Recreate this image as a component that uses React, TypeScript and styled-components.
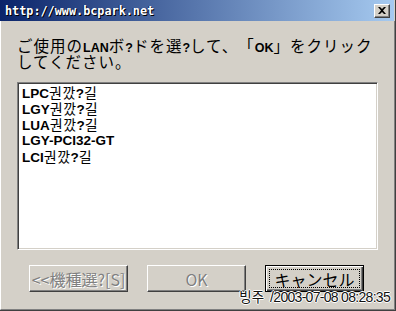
import React from "react";
import styled, { createGlobalStyle } from "styled-components";

const Global = createGlobalStyle`
  html, body { margin: 0; padding: 0; background: #D4D0C8; }
  #root { width: 396px; height: 311px; }
`;

const Window = styled.div`
  box-sizing: border-box;
  width: 396px;
  height: 311px;
  background: #D4D0C8;
  border-right: 1px solid #404040;
  border-bottom: 1px solid #404040;
  display: flex;
  flex-direction: column;
  position: relative;
  overflow: hidden;
`;

const TitleBar = styled.div`
  height: 21px;
  margin-right: 1px;
  flex: none;
  display: flex;
  align-items: center;
  justify-content: space-between;
  padding: 0 4px 0 5px;
  background: linear-gradient(to right, #0A246A, #A6CAF0);
`;

const TitleText = styled.span`
  font-family: "DejaVu Sans Mono", monospace;
  font-weight: bold;
  font-size: 11.8px;
  color: #fff;
  text-shadow: 1px 1px 0 #000, -1px 0 0 #0A246A;
  white-space: nowrap;
`;

const CloseButton = styled.div`
  box-sizing: border-box;
  width: 16px;
  height: 14px;
  background: #D4D0C8;
  border: 1px solid;
  border-color: #fff #404040 #404040 #fff;
  box-shadow: inset -1px -1px #808080;
  display: flex;
  align-items: center;
  justify-content: center;
`;

const Body = styled.div`
  flex: 1;
  display: flex;
  flex-direction: column;
  border-left: 1px solid #fff;
  border-right: 1px solid #808080;
  border-bottom: 1px solid #808080;
  padding: 16px 0 0 16px;
`;

const Message = styled.div`
  font-family: "Noto Sans CJK JP", sans-serif;
  font-size: 15.5px;
  letter-spacing: 1px;
  line-height: 16px;
  height: 32px;
  color: #000;
  white-space: nowrap;
  text-spacing-trim: space-all;
  margin-bottom: 13px;
`;

const MessageLine = styled.div`
  height: 16px;
  line-height: 16px;
`;

const Latin = styled.span`
  font-family: "Liberation Sans", Arial, sans-serif;
  font-weight: bold;
  font-size: 12.5px;
  letter-spacing: 0;
`;

const ListBox = styled.div`
  box-sizing: border-box;
  width: 361px;
  height: 168px;
  background: #fff;
  border: 1px solid;
  border-color: #808080 #fff #fff #808080;
  box-shadow: inset 1px 1px #404040, inset -1px -1px #D4D0C8;
  padding: 1px 0 0 4px;
`;

const Row = styled.div`
  height: 16px;
  line-height: 16px;
  white-space: nowrap;
  color: #000;
`;

const Code = styled.span`
  font-family: "Liberation Sans", Arial, sans-serif;
  font-weight: bold;
  font-size: 13.5px;
`;

const Hangul = styled.span`
  display: inline-block;
  height: 16px;
  line-height: 16px;
  font-family: "Noto Sans CJK KR", sans-serif;
  font-size: 14px;
  font-weight: 400;
  letter-spacing: 0.5px;
`;

const ButtonRow = styled.div`
  display: flex;
  gap: 19px;
  margin: 15px 0 0 12px;
`;

const Button = styled.div<{ $disabled?: boolean; $default?: boolean }>`
  box-sizing: border-box;
  width: 99px;
  height: 27px;
  background: #D4D0C8;
  border: 1px solid;
  border-color: ${(p) => (p.$default ? "#000" : "#fff #404040 #404040 #fff")};
  box-shadow: ${(p) =>
    p.$default
      ? "inset 1px 1px #fff, inset -1px -1px #404040, inset -2px -2px #808080"
      : "inset -1px -1px #808080"};
  display: flex;
  padding: ${(p) => (p.$default ? "2px" : "0")};
  font-family: "Noto Sans CJK JP", sans-serif;
  font-size: 16px;
  color: ${(p) => (p.$disabled ? "#808080" : "#000")};
  text-shadow: ${(p) => (p.$disabled ? "1px 1px 0 #fff" : "none")};
`;

const Label = styled.span<{ $focus?: boolean }>`
  flex: 1;
  display: flex;
  align-items: center;
  justify-content: center;
  white-space: nowrap;
  margin: ${(p) => (p.$focus ? "1px" : "0")};
  border: ${(p) => (p.$focus ? "1px dotted #000" : "none")};
  line-height: 1;
`;

const Watermark = styled.div`
  position: absolute;
  right: 5px;
  bottom: 4px;
  display: flex;
  align-items: baseline;
  gap: 6px;
  color: #111;
  text-shadow: 1px 0 #fff, -1px 0 #fff, 0 1px #fff, 0 -1px #fff;
  white-space: nowrap;
`;

const WmKorean = styled.span`
  font-family: "Noto Sans CJK KR", sans-serif;
  font-size: 13.5px;
`;

const WmStamp = styled.span`
  font-family: "Liberation Sans", Arial, sans-serif;
  font-size: 14px;
  letter-spacing: -0.7px;
`;

const items: { code: string; tail: boolean }[] = [
  { code: "LPC", tail: true },
  { code: "LGY", tail: true },
  { code: "LUA", tail: true },
  { code: "LGY-PCI32-GT", tail: false },
  { code: "LCI", tail: true },
];

export default function App() {
  return (
    <>
      <Global />
      <Window>
        <TitleBar>
          <TitleText>http://www.bcpark.net</TitleText>
          <CloseButton>
            <svg width="8" height="7" viewBox="0 0 8 7">
              <path d="M0 0h2l2 2 2-2h2L5 3.5 8 7H6L4 5 2 7H0l3-3.5z" fill="#000" />
            </svg>
          </CloseButton>
        </TitleBar>
        <Body>
          <Message>
            <MessageLine>
              ご使用の<Latin>LAN</Latin>ボ<Latin>?</Latin>ドを選<Latin>?</Latin>して、「<Latin>OK</Latin>」をクリック
            </MessageLine>
            <MessageLine>してください。</MessageLine>
          </Message>
          <ListBox>
            {items.map((it) => (
              <Row key={it.code}>
                <Code>{it.code}</Code>
                {it.tail && (
                  <>
                    <Hangul>권깠</Hangul>
                    <Code>?</Code>
                    <Hangul>길</Hangul>
                  </>
                )}
              </Row>
            ))}
          </ListBox>
          <ButtonRow>
            <Button $disabled>
              <Label>&lt;&lt;機種選?[S]</Label>
            </Button>
            <Button $disabled>
              <Label>OK</Label>
            </Button>
            <Button $default>
              <Label $focus>キャンセル</Label>
            </Button>
          </ButtonRow>
        </Body>
        <Watermark>
          <WmKorean>빙주</WmKorean>
          <WmStamp>/2003-07-08 08:28:35</WmStamp>
        </Watermark>
      </Window>
    </>
  );
}
